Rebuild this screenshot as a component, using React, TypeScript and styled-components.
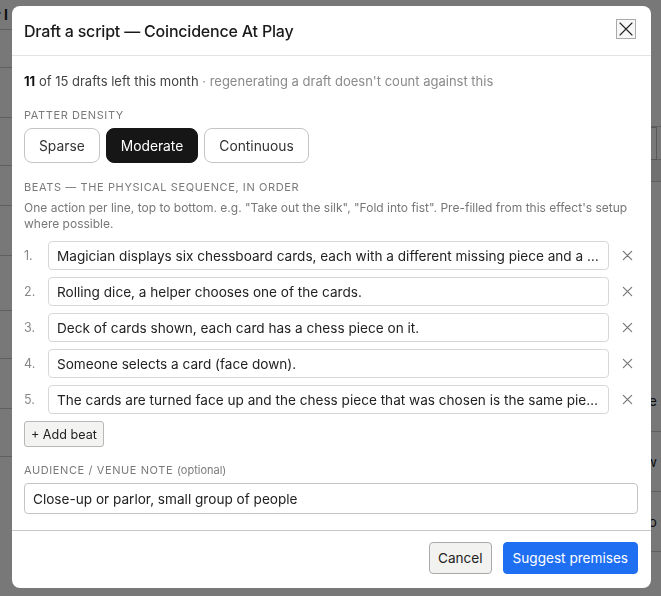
import styled, { createGlobalStyle } from "styled-components";
import { useState } from "react";

const GlobalStyle = createGlobalStyle`
  html, body { margin: 0; padding: 0; }
  body {
    font-family: Inter, "Noto Sans", "Liberation Sans", sans-serif;
    color: #1d1d1f;
    background: #fff;
  }
  * { box-sizing: border-box; }
`;

// page behind the dialog
const Page = styled.div`
  width: 661px;
  height: 596px;
  overflow: hidden;
  display: grid;
  grid-template-columns: 12px 1fr 300px;
  font-size: 14px;
  color: #222;
`;

const PageColumn = styled.div`
  display: flex;
  flex-direction: column;
  min-width: 0;
`;

const PageRow = styled.div<{ $h: number; $shade?: boolean; $flat?: boolean }>`
  height: ${(p) => p.$h}px;
  border-bottom: ${(p) => (p.$flat ? "0" : "1px solid #ccc")};
  background: ${(p) => (p.$shade ? "#f0f0f0" : "transparent")};
  display: flex;
  align-items: center;
  justify-content: flex-end;
  padding: 0 4px;
  white-space: nowrap;
`;

const PageChip = styled.span`
  border: 1px solid #bbb;
  padding: 7px 8px;
`;

const Backdrop = styled.div`
  position: fixed;
  inset: 0;
  background: rgba(0, 0, 0, 0.53);
  padding: 6px 10px 8px 12px;
  display: flex;
  align-items: flex-start;
`;

const Dialog = styled.div`
  width: 639px;
  height: 582px;
  background: #fff;
  border-radius: 8px;
  display: flex;
  flex-direction: column;
  overflow: hidden;
`;

const Header = styled.div`
  height: 50px;
  border-bottom: 1px solid #e2e2e2;
  display: flex;
  align-items: center;
  justify-content: space-between;
  padding: 0 15px 0 12px;
`;

const Title = styled.h2`
  margin: 0;
  font-size: 16px;
  font-weight: 500;
  letter-spacing: -0.2px;
  color: #1a1a1a;
`;

const CloseButton = styled.button`
  width: 20px;
  height: 20px;
  padding: 0;
  border: 1px solid #aaa;
  background: #f7f7f7;
  display: flex;
  align-items: center;
  justify-content: center;
  margin-top: -4px;
`;

const Body = styled.div`
  flex: 1;
  padding: 17px 12px 0 12px;
  display: flex;
  flex-direction: column;
`;

const Quota = styled.p`
  margin: 0 0 19px;
  font-size: 13px;
  line-height: 16px;
  color: #444;
  b { color: #111; font-weight: 700; }
  span { color: #8a8a8a; }
`;

const Label = styled.div`
  font-size: 11px;
  line-height: 14px;
  letter-spacing: 0.6px;
  text-transform: uppercase;
  color: #7a7a7a;
  margin-bottom: 6px;
  small {
    text-transform: none;
    letter-spacing: 0;
    font-size: 11px;
  }
`;

const Segments = styled.div`
  display: flex;
  gap: 6px;
  margin-bottom: 17px;
`;

const Segment = styled.button<{ $active?: boolean }>`
  height: 35px;
  padding: 0 14px;
  font: inherit;
  font-size: 13.8px;
  border-radius: 8px;
  border: 1px solid ${(p) => (p.$active ? "#161616" : "#c4c4c4")};
  background: ${(p) => (p.$active ? "#161616" : "#fff")};
  color: ${(p) => (p.$active ? "#fff" : "#333")};
`;

const Help = styled.p`
  margin: 0 0 9px;
  font-size: 12px;
  line-height: 16px;
  color: #777;
`;

const Beats = styled.div`
  display: flex;
  flex-direction: column;
  gap: 7px;
  margin-bottom: 7px;
`;

const BeatRow = styled.div`
  display: flex;
  align-items: center;
`;

const BeatNum = styled.span`
  width: 24px;
  font-size: 12.5px;
  color: #888;
`;

const BeatInput = styled.input`
  width: 561px;
  height: 29px;
  padding: 0 8px;
  font: inherit;
  font-size: 13.6px;
  color: #222;
  border: 1px solid #d8d8d8;
  border-radius: 4px;
  text-overflow: ellipsis;
  outline: none;
`;

const RemoveButton = styled.button`
  margin-left: 10px;
  width: 16px;
  height: 16px;
  padding: 0;
  border: 0;
  background: none;
  display: flex;
  align-items: center;
  justify-content: center;
`;

const AddButton = styled.button`
  align-self: flex-start;
  height: 26px;
  padding: 0 6px;
  font: inherit;
  font-size: 12.6px;
  color: #222;
  background: #f3f3f1;
  border: 1px solid #b8b8b8;
  border-radius: 3px;
  margin-bottom: 16px;
`;

const NoteInput = styled.input`
  width: 614px;
  height: 31px;
  padding: 0 8px;
  font: inherit;
  font-size: 13.6px;
  color: #222;
  border: 1px solid #c4c4c4;
  border-radius: 4px;
  outline: none;
`;

const Footer = styled.div`
  height: 58px;
  border-top: 1px solid #c8c8c8;
  display: flex;
  align-items: center;
  justify-content: flex-end;
  gap: 11px;
  padding: 0 13px 3px 0;
`;

const FooterButton = styled.button<{ $primary?: boolean }>`
  height: 32px;
  padding: 0 ${(p) => (p.$primary ? 9 : 8)}px;
  font: inherit;
  font-size: 13.6px;
  border-radius: 4px;
  border: 1px solid ${(p) => (p.$primary ? "#1f6ff2" : "#aaa")};
  background: ${(p) => (p.$primary ? "#1f6ff2" : "#f2f2f0")};
  color: ${(p) => (p.$primary ? "#fff" : "#222")};
`;

const Cross = ({ size, color, w }: { size: number; color: string; w: number }) => (
  <svg width={size} height={size} viewBox="0 0 16 16">
    <path d="M2 2 L14 14 M14 2 L2 14" stroke={color} strokeWidth={w} strokeLinecap="round" />
  </svg>
);

const initialBeats = [
  "Magician displays six chessboard cards, each with a different missing piece and a number.",
  "Rolling dice, a helper chooses one of the cards.",
  "Deck of cards shown, each card has a chess piece on it.",
  "Someone selects a card (face down).",
  "The cards are turned face up and the chess piece that was chosen is the same piece that is missing.",
];

export default function App() {
  const [density, setDensity] = useState("Moderate");
  const [beats, setBeats] = useState(initialBeats);
  const [note, setNote] = useState("Close-up or parlor, small group of people");

  return (
    <>
      <GlobalStyle />
      <Page>
        <PageColumn>
          <PageRow $h={30}><b>Tier I</b></PageRow>
          <PageRow $h={38} />
          <PageRow $h={50} />
          <PageRow $h={48} />
          <PageRow $h={40} />
          <PageRow $h={50} />
          <PageRow $h={55} />
          <PageRow $h={48} />
          <PageRow $h={50} />
          <PageRow $h={48} />
        </PageColumn>
        <PageColumn />
        <PageColumn>
          <PageRow $h={127} />
          <PageRow $h={33}><PageChip>Extra</PageChip></PageRow>
          <PageRow $h={22} $shade />
          <PageRow $h={198} $flat />
          <PageRow $h={40} $flat><span>Place</span></PageRow>
          <PageRow $h={12} />
          <PageRow $h={60}><span>Show</span></PageRow>
          <PageRow $h={60}><span>Too</span></PageRow>
        </PageColumn>
      </Page>

      <Backdrop>
        <Dialog>
          <Header>
            <Title>Draft a script — Coincidence At Play</Title>
            <CloseButton aria-label="Close">
              <Cross size={16} color="#222" w={1.1} />
            </CloseButton>
          </Header>

          <Body>
            <Quota>
              <b>11</b> of 15 drafts left this month <span>· regenerating a draft doesn't count against this</span>
            </Quota>

            <Label>Patter density</Label>
            <Segments>
              {["Sparse", "Moderate", "Continuous"].map((d) => (
                <Segment key={d} $active={density === d} onClick={() => setDensity(d)}>
                  {d}
                </Segment>
              ))}
            </Segments>

            <Label>Beats — the physical sequence, in order</Label>
            <Help>
              One action per line, top to bottom. e.g. "Take out the silk", "Fold into fist". Pre-filled from this
              effect's setup where possible.
            </Help>

            <Beats>
              {beats.map((b, i) => (
                <BeatRow key={i}>
                  <BeatNum>{i + 1}.</BeatNum>
                  <BeatInput
                    value={b}
                    onChange={(e) => setBeats(beats.map((x, j) => (j === i ? e.target.value : x)))}
                  />
                  <RemoveButton onClick={() => setBeats(beats.filter((_, j) => j !== i))}>
                    <Cross size={11} color="#7a7a7a" w={1.8} />
                  </RemoveButton>
                </BeatRow>
              ))}
            </Beats>
            <AddButton onClick={() => setBeats([...beats, ""])}>+ Add beat</AddButton>

            <Label>
              Audience / venue note <small>(optional)</small>
            </Label>
            <NoteInput value={note} onChange={(e) => setNote(e.target.value)} />
          </Body>

          <Footer>
            <FooterButton>Cancel</FooterButton>
            <FooterButton $primary>Suggest premises</FooterButton>
          </Footer>
        </Dialog>
      </Backdrop>
    </>
  );
}
